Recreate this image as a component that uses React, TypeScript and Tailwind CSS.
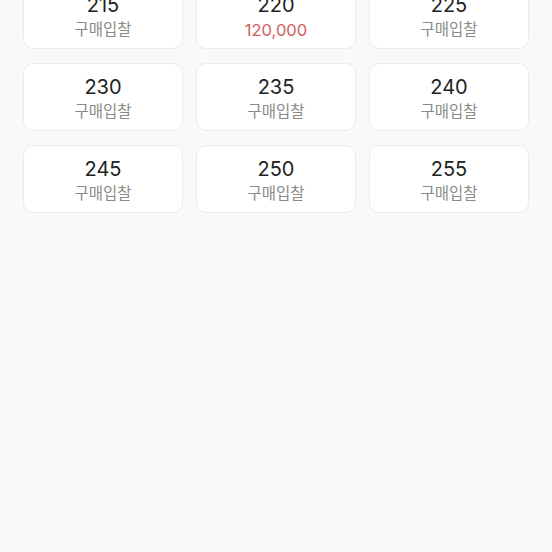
const sizes = [
    { size: '215', label: '구매입찰' },
    { size: '220', label: '120,000', price: true },
    { size: '225', label: '구매입찰' },
    { size: '230', label: '구매입찰' },
    { size: '235', label: '구매입찰' },
    { size: '240', label: '구매입찰' },
    { size: '245', label: '구매입찰' },
    { size: '250', label: '구매입찰' },
    { size: '255', label: '구매입찰' },
]

export default function App() {
    return (
        <div
            className="w-full h-[552px] overflow-hidden bg-[#f9f9f9]"
            style={{ fontFamily: 'Inter, "Noto Sans CJK KR", sans-serif' }}>
            <div className="grid grid-cols-3 gap-x-[13px] gap-y-[14px] px-[23px] -mt-[19px]">
                {sizes.map((s) => (
                    <div
                        key={s.size}
                        className="h-[68px] flex flex-col items-center pt-[11px] bg-white border border-[#ebebeb] rounded-[10px]">
                        <div className="text-[20px] leading-[25px] text-[#222]">{s.size}</div>
                        <div
                            className={
                                s.price
                                    ? 'text-[16.5px] leading-[24px] text-[#d0605c]'
                                    : 'text-[15.5px] leading-[24px] text-[#8a8a8a]'
                            }>
                            {s.label}
                        </div>
                    </div>
                ))}
            </div>
        </div>
    )
}
